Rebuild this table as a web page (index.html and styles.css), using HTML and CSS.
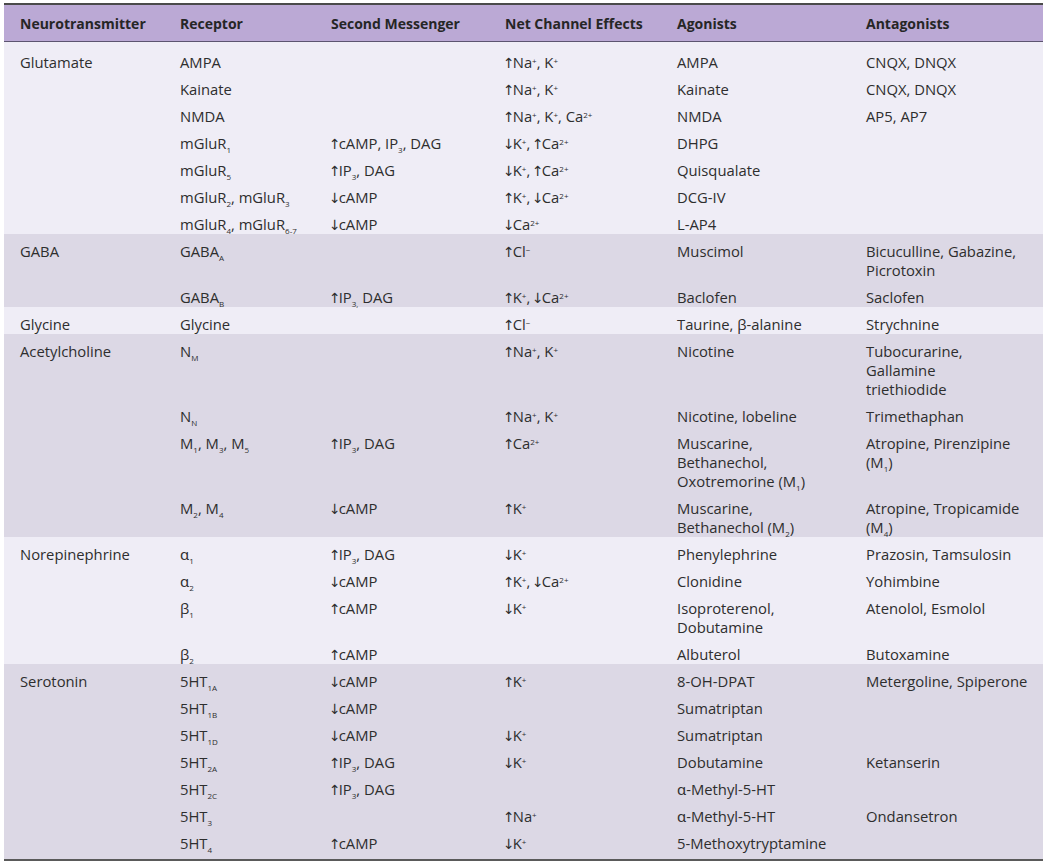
FILE: index.html
```html
<!DOCTYPE html>
<html>
<head>
<meta charset="utf-8">
<link rel="stylesheet" href="styles.css">
</head>
<body>
<table class="nt">
<colgroup>
<col class="c1"><col class="c2"><col class="c3"><col class="c4"><col class="c5"><col class="c6">
</colgroup>
<thead>
<tr><th>Neurotransmitter</th><th>Receptor</th><th>Second Messenger</th><th>Net Channel Effects</th><th>Agonists</th><th>Antagonists</th></tr>
</thead>
<tbody class="light first">
<tr><td>Glutamate</td><td>AMPA</td><td></td><td><span class="ar">↑</span>Na<sup>+</sup>, K<sup>+</sup></td><td>AMPA</td><td>CNQX, DNQX</td></tr>
<tr><td></td><td>Kainate</td><td></td><td><span class="ar">↑</span>Na<sup>+</sup>, K<sup>+</sup></td><td>Kainate</td><td>CNQX, DNQX</td></tr>
<tr><td></td><td>NMDA</td><td></td><td><span class="ar">↑</span>Na<sup>+</sup>, K<sup>+</sup>, Ca<sup>2+</sup></td><td>NMDA</td><td>AP5, AP7</td></tr>
<tr><td></td><td>mGluR<sub>1</sub></td><td><span class="ar">↑</span>cAMP, IP<sub>3</sub>, DAG</td><td><span class="ar">↓</span>K<sup>+</sup>, <span class="ar">↑</span>Ca<sup>2+</sup></td><td>DHPG</td><td></td></tr>
<tr><td></td><td>mGluR<sub>5</sub></td><td><span class="ar">↑</span>IP<sub>3</sub>, DAG</td><td><span class="ar">↓</span>K<sup>+</sup>, <span class="ar">↑</span>Ca<sup>2+</sup></td><td>Quisqualate</td><td></td></tr>
<tr><td></td><td>mGluR<sub>2</sub>, mGluR<sub>3</sub></td><td><span class="ar">↓</span>cAMP</td><td><span class="ar">↑</span>K<sup>+</sup>, <span class="ar">↓</span>Ca<sup>2+</sup></td><td>DCG-IV</td><td></td></tr>
<tr><td></td><td>mGluR<sub>4</sub>, mGluR<sub>6-7</sub></td><td><span class="ar">↓</span>cAMP</td><td><span class="ar">↓</span>Ca<sup>2+</sup></td><td>L-AP4</td><td></td></tr>
</tbody>
<tbody class="dark">
<tr><td>GABA</td><td>GABA<sub>A</sub></td><td></td><td><span class="ar">↑</span>Cl<sup>−</sup></td><td>Muscimol</td><td>Bicuculline, Gabazine,<br>Picrotoxin</td></tr>
<tr><td></td><td>GABA<sub>B</sub></td><td><span class="ar">↑</span>IP<sub>3,</sub> DAG</td><td><span class="ar">↑</span>K<sup>+</sup>, <span class="ar">↓</span>Ca<sup>2+</sup></td><td>Baclofen</td><td>Saclofen</td></tr>
</tbody>
<tbody class="light">
<tr><td>Glycine</td><td>Glycine</td><td></td><td><span class="ar">↑</span>Cl<sup>−</sup></td><td>Taurine, β-alanine</td><td>Strychnine</td></tr>
</tbody>
<tbody class="dark">
<tr><td>Acetylcholine</td><td>N<sub>M</sub></td><td></td><td><span class="ar">↑</span>Na<sup>+</sup>, K<sup>+</sup></td><td>Nicotine</td><td>Tubocurarine,<br>Gallamine<br>triethiodide</td></tr>
<tr><td></td><td>N<sub>N</sub></td><td></td><td><span class="ar">↑</span>Na<sup>+</sup>, K<sup>+</sup></td><td>Nicotine, lobeline</td><td>Trimethaphan</td></tr>
<tr><td></td><td>M<sub>1</sub>, M<sub>3</sub>, M<sub>5</sub></td><td><span class="ar">↑</span>IP<sub>3</sub>, DAG</td><td><span class="ar">↑</span>Ca<sup>2+</sup></td><td>Muscarine,<br>Bethanechol,<br>Oxotremorine (M<sub>1</sub>)</td><td>Atropine, Pirenzipine<br>(M<sub>1</sub>)</td></tr>
<tr><td></td><td>M<sub>2</sub>, M<sub>4</sub></td><td><span class="ar">↓</span>cAMP</td><td><span class="ar">↑</span>K<sup>+</sup></td><td>Muscarine,<br>Bethanechol (M<sub>2</sub>)</td><td>Atropine, Tropicamide<br>(M<sub>4</sub>)</td></tr>
</tbody>
<tbody class="light">
<tr><td>Norepinephrine</td><td><span class="gr">α</span><sub>1</sub></td><td><span class="ar">↑</span>IP<sub>3</sub>, DAG</td><td><span class="ar">↓</span>K<sup>+</sup></td><td>Phenylephrine</td><td>Prazosin, Tamsulosin</td></tr>
<tr><td></td><td><span class="gr">α</span><sub>2</sub></td><td><span class="ar">↓</span>cAMP</td><td><span class="ar">↑</span>K<sup>+</sup>, <span class="ar">↓</span>Ca<sup>2+</sup></td><td>Clonidine</td><td>Yohimbine</td></tr>
<tr><td></td><td>β<sub>1</sub></td><td><span class="ar">↑</span>cAMP</td><td><span class="ar">↓</span>K<sup>+</sup></td><td>Isoproterenol,<br>Dobutamine</td><td>Atenolol, Esmolol</td></tr>
<tr><td></td><td>β<sub>2</sub></td><td><span class="ar">↑</span>cAMP</td><td></td><td>Albuterol</td><td>Butoxamine</td></tr>
</tbody>
<tbody class="dark last">
<tr><td>Serotonin</td><td>5HT<sub>1A</sub></td><td><span class="ar">↓</span>cAMP</td><td><span class="ar">↑</span>K<sup>+</sup></td><td>8-OH-DPAT</td><td>Metergoline, Spiperone</td></tr>
<tr><td></td><td>5HT<sub>1B</sub></td><td><span class="ar">↓</span>cAMP</td><td></td><td>Sumatriptan</td><td></td></tr>
<tr><td></td><td>5HT<sub>1D</sub></td><td><span class="ar">↓</span>cAMP</td><td><span class="ar">↓</span>K<sup>+</sup></td><td>Sumatriptan</td><td></td></tr>
<tr><td></td><td>5HT<sub>2A</sub></td><td><span class="ar">↑</span>IP<sub>3</sub>, DAG</td><td><span class="ar">↓</span>K<sup>+</sup></td><td>Dobutamine</td><td>Ketanserin</td></tr>
<tr><td></td><td>5HT<sub>2C</sub></td><td><span class="ar">↑</span>IP<sub>3</sub>, DAG</td><td></td><td><span class="gr">α</span>-Methyl-5-HT</td><td></td></tr>
<tr><td></td><td>5HT<sub>3</sub></td><td></td><td><span class="ar">↑</span>Na<sup>+</sup></td><td><span class="gr">α</span>-Methyl-5-HT</td><td>Ondansetron</td></tr>
<tr><td></td><td>5HT<sub>4</sub></td><td><span class="ar">↑</span>cAMP</td><td><span class="ar">↓</span>K<sup>+</sup></td><td>5-Methoxytryptamine</td><td></td></tr>
</tbody>
</table>
</body>
</html>
```
FILE: styles.css
```css
html, body {
  margin: 0;
  padding: 0;
  background: #ffffff;
}
body {
  padding: 3px 4px 0 4px;
  font-family: "Open Sans", "Noto Sans", sans-serif;
  color: #2e2e2e;
}
.nt {
  width: 1039px;
  table-layout: fixed;
  border-collapse: collapse;
  border-spacing: 0;
  font-size: 14.8px;
  border-top: 2px solid #4a4a4a;
  border-bottom: 2px solid #5a5a5a;
}
.c1 { width: 160px; }
.c2 { width: 151px; }
.c3 { width: 174px; }
.c4 { width: 172px; }
.c5 { width: 189px; }
.c6 { width: 193px; }
.nt thead th {
  background: #bba9d5;
  text-align: left;
  font-weight: bold;
  font-size: 14px;
  color: #262626;
  height: 36px;
  padding: 0 0 0 16px;
  line-height: 19px;
  border-bottom: 1px solid #5c5470;
  white-space: nowrap;
}
.nt td {
  padding: 8px 0 0 16px;
  line-height: 19px;
  height: 19px;
  vertical-align: top;
  white-space: nowrap;
}
.light { background: #efedf6; }
.dark { background: #dcd8e5; }
.first tr:first-child td { padding-top: 11px; }
.last tr:last-child td { padding-bottom: 6px; }
sub {
  font-size: 8px;
  line-height: 0;
  vertical-align: -4px;
}
sup {
  font-size: 8px;
  line-height: 0;
  vertical-align: 4px;
}
.ar {
  font-family: "DejaVu Sans", sans-serif;
  font-size: 14px;
  line-height: 0;
  margin-left: -2px;
  margin-right: -2px;
}
.gr {
  font-family: "Noto Sans", sans-serif;
  line-height: 0;
}
```
